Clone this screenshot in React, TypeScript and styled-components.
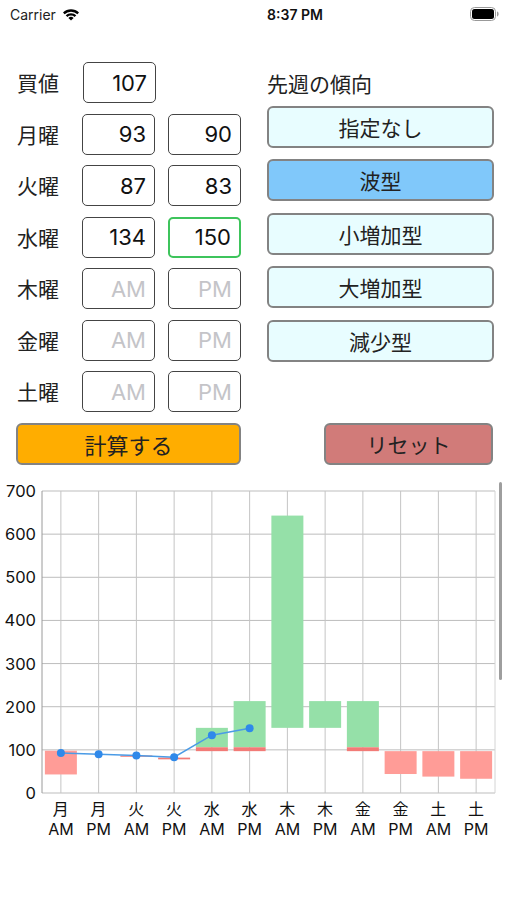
import React from "react";
import styled, { createGlobalStyle } from "styled-components";

const GlobalStyle = createGlobalStyle`
    body {
        margin: 0;
        background: #fff;
        font-family: Inter, "Noto Sans CJK JP", sans-serif;
        color: #111;
    }
`;

type Day = { label: string; am?: string; pm?: string; focus?: boolean };

const days: Day[] = [
    { label: "月曜", am: "93", pm: "90" },
    { label: "火曜", am: "87", pm: "83" },
    { label: "水曜", am: "134", pm: "150", focus: true },
    { label: "木曜" },
    { label: "金曜" },
    { label: "土曜" },
];

const patterns = ["指定なし", "波型", "小増加型", "大増加型", "減少型"];

const StatusBar = () => (
    <Status>
        <Carrier>
            Carrier
            <svg width="18" height="13" viewBox="0 0 18 13">
                <path d="M1 4.6a11.5 11.5 0 0 1 16 0L15.4 6.3a9.2 9.2 0 0 0-12.8 0z" fill="#000" />
                <path d="M3.7 7.3a7.6 7.6 0 0 1 10.6 0L12.6 9a5.2 5.2 0 0 0-7.2 0z" fill="#000" />
                <path d="M6.4 10a3.7 3.7 0 0 1 5.2 0L9 12.6z" fill="#000" />
            </svg>
        </Carrier>
        <Clock>8:37 PM</Clock>
        <svg width="30" height="14" viewBox="0 0 30 14">
            <rect x="0.5" y="0.5" width="25" height="13" rx="4" fill="none" stroke="#999" />
            <rect x="2" y="2" width="22" height="10" rx="2.5" fill="#000" />
            <path d="M27 4.5v5c1-.3 1.6-1.2 1.6-2.5S28 4.8 27 4.5z" fill="#999" />
        </svg>
    </Status>
);

// chart geometry
const W = 507;
const H = 372;
const L = 42;
const R = 495;
const T = 16;
const B = 318;
const band = (R - L) / 12;
const yOf = (v: number) => B - (v / 700) * (B - T);
const cx = (i: number) => L + band * i + band / 2;

type Rect = { i: number; lo: number; hi: number; color: string };
const GREEN = "#95e0a8";
const RED = "#ff9c97";
const DARKRED = "#f27b77";

const rects: Rect[] = [
    { i: 0, lo: 43, hi: 98, color: RED },
    { i: 2, lo: 84, hi: 87, color: DARKRED },
    { i: 3, lo: 78, hi: 82, color: DARKRED },
    { i: 4, lo: 106, hi: 151, color: GREEN },
    { i: 4, lo: 97, hi: 106, color: DARKRED },
    { i: 5, lo: 106, hi: 213, color: GREEN },
    { i: 5, lo: 97, hi: 106, color: DARKRED },
    { i: 6, lo: 151, hi: 643, color: GREEN },
    { i: 7, lo: 151, hi: 213, color: GREEN },
    { i: 8, lo: 106, hi: 213, color: GREEN },
    { i: 8, lo: 97, hi: 106, color: DARKRED },
    { i: 9, lo: 44, hi: 97, color: RED },
    { i: 10, lo: 38, hi: 97, color: RED },
    { i: 11, lo: 33, hi: 97, color: RED },
];

const prices = [93, 90, 87, 83, 134, 150];
const xLabels = ["月", "月", "火", "火", "水", "水", "木", "木", "金", "金", "土", "土"];

const Chart = () => {
    const barW = 32;
    const line = prices.map((p, i) => `${cx(i)},${yOf(p)}`).join(" ");
    return (
        <ChartSvg width={W} height={H} viewBox={`0 0 ${W} ${H}`}>
            {[0, 100, 200, 300, 400, 500, 600, 700].map((v) => (
                <g key={v}>
                    <line x1={L} x2={R} y1={yOf(v)} y2={yOf(v)} stroke="#bdbdbd" />
                    <text x={36} y={yOf(v) + 6} textAnchor="end" fontSize="16.5" fill="#111">
                        {v}
                    </text>
                </g>
            ))}
            {xLabels.map((_, i) => (
                <line key={i} x1={cx(i)} x2={cx(i)} y1={T} y2={B} stroke="#c4c4c4" />
            ))}
            <line x1={L} x2={L} y1={T} y2={B} stroke="#9a9a9a" />
            <line x1={R} x2={R} y1={T} y2={B} stroke="#d4d4d4" />
            {rects.map((r, k) => (
                <rect
                    key={k}
                    x={cx(r.i) - barW / 2}
                    width={barW}
                    y={yOf(r.hi)}
                    height={yOf(r.lo) - yOf(r.hi)}
                    fill={r.color}
                />
            ))}
            <polyline points={line} fill="none" stroke="#4a9be6" strokeWidth="1.5" />
            {prices.map((p, i) => (
                <circle key={i} cx={cx(i)} cy={yOf(p)} r="4" fill="#2f89ea" />
            ))}
            {xLabels.map((d, i) => (
                <text key={i} x={cx(i)} textAnchor="middle" fontSize="16" fill="#111">
                    <tspan x={cx(i)} y={340}>
                        {d}
                    </tspan>
                    <tspan x={cx(i)} y={360}>
                        {i % 2 === 0 ? "AM" : "PM"}
                    </tspan>
                </text>
            ))}
            <rect x={499} y={7} width={3} height={198} rx={1.5} fill="#9e9e9e" />
        </ChartSvg>
    );
};

const App: React.FC = () => {
    return (
        <>
            <GlobalStyle />
            <StatusBar />
            <Form>
                <LeftCol>
                    <Row>
                        <Label>買値</Label>
                        <Field defaultValue="107" />
                    </Row>
                    {days.map((d) => (
                        <Row key={d.label}>
                            <Label>{d.label}</Label>
                            <Field defaultValue={d.am} placeholder="AM" />
                            <Field defaultValue={d.pm} placeholder="PM" focused={d.focus} />
                        </Row>
                    ))}
                </LeftCol>
                <RightCol>
                    <Heading>先週の傾向</Heading>
                    {patterns.map((p) => (
                        <PatternButton key={p} selected={p === "波型"}>
                            {p}
                        </PatternButton>
                    ))}
                </RightCol>
                <CalcButton>計算する</CalcButton>
                <ResetButton>リセット</ResetButton>
            </Form>
            <Chart />
        </>
    );
};

const Status = styled.div`
    height: 28px;
    padding: 0 7px 0 10px;
    display: flex;
    align-items: center;
    justify-content: space-between;
    font-family: Inter, sans-serif;
    font-size: 14px;
`;

const Carrier = styled.div`
    display: flex;
    align-items: center;
    gap: 6px;
    width: 110px;
    color: #222;
`;

const Clock = styled.div`
    font-weight: 600;
    color: #111;
`;

const Form = styled.div`
    display: grid;
    grid-template-columns: 225px 227px;
    column-gap: 26px;
    row-gap: 11px;
    padding: 34px 0 0 16px;
`;

const LeftCol = styled.div`
    display: flex;
    flex-direction: column;
    gap: 10.5px;
`;

const RightCol = styled.div`
    display: flex;
    flex-direction: column;
    gap: 11.5px;
`;

const Row = styled.div`
    display: flex;
    align-items: center;
    height: 41px;
    gap: 13px;
`;

const Label = styled.div`
    width: 53px;
    padding-left: 1px;
    font-family: "Noto Sans CJK JP", sans-serif;
    font-size: 21px;
    line-height: 1;
    color: #222;
`;

const Field = styled.input<{ focused?: boolean }>`
    box-sizing: border-box;
    width: 73px;
    height: 41px;
    padding: 0 8px 0 4px;
    border: ${(p) => (p.focused ? "2px solid #3ec45c" : "1px solid #444")};
    border-radius: 5px;
    font-family: Inter, sans-serif;
    font-size: 22px;
    text-align: right;
    color: #111;
    outline: none;
    &::placeholder {
        color: #c4c4c8;
    }
`;

const Heading = styled.div`
    height: 32px;
    display: flex;
    align-items: flex-end;
    font-family: "Noto Sans CJK JP", sans-serif;
    font-size: 21px;
    line-height: 1;
    color: #222;
`;

const Btn = styled.div`
    box-sizing: border-box;
    height: 42px;
    border: 2px solid #838383;
    border-radius: 6px;
    display: flex;
    align-items: center;
    justify-content: center;
    font-family: "Noto Sans CJK JP", sans-serif;
    font-size: 21px;
    color: #222;
`;

const PatternButton = styled(Btn)<{ selected?: boolean }>`
    background: ${(p) => (p.selected ? "#80c8fa" : "#e8fdff")};
`;

const CalcButton = styled(Btn)`
    background: #ffad00;
    font-size: 22px;
`;

const ResetButton = styled(Btn)`
    margin-left: 57px;
    margin-right: 1px;
    background: #d17b79;
`;

const ChartSvg = styled.svg`
    display: block;
    margin-top: 10px;
    font-family: Inter, "Noto Sans CJK JP", sans-serif;
`;

export default App;
